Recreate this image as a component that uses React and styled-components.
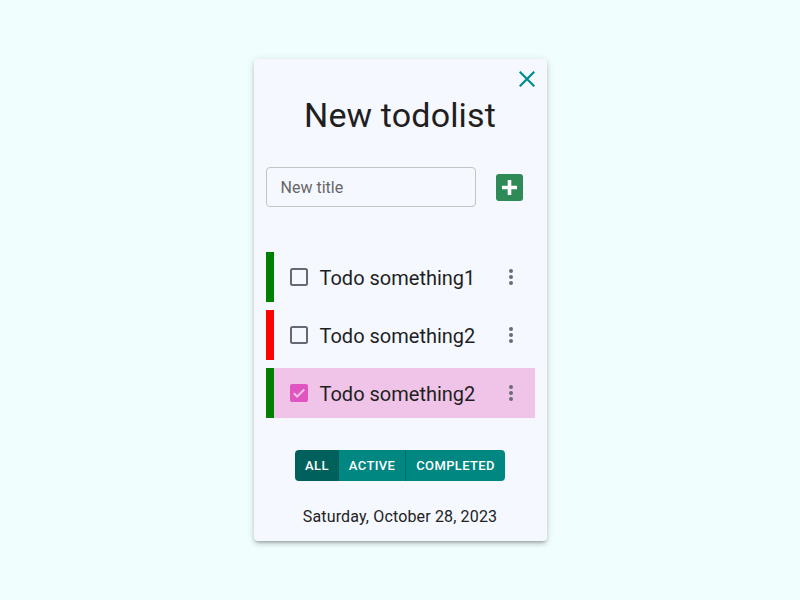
import React from "react";
import styled, { createGlobalStyle } from "styled-components";

const Global = createGlobalStyle`
  html, body { margin: 0; padding: 0; }
  body {
    background: #f0fffe;
    font-family: Roboto, "Liberation Sans", Arial, sans-serif;
  }
`;

const Page = styled.div`
  height: 100vh;
  display: flex;
  align-items: center;
  justify-content: center;
`;

const Card = styled.div`
  position: relative;
  width: 293px;
  box-sizing: border-box;
  padding: 35px 12px 12px;
  background: #f5f8ff;
  border-radius: 4px;
  box-shadow: 0px 3px 3px -2px rgba(0,0,0,0.2), 0px 3px 4px 0px rgba(0,0,0,0.14), 0px 1px 8px 0px rgba(0,0,0,0.12);
  display: flex;
  flex-direction: column;
`;

const CloseButton = styled.button`
  position: absolute;
  top: 9px;
  right: 9px;
  width: 22px;
  height: 22px;
  padding: 0;
  border: 0;
  background: transparent;
  display: flex;
  align-items: center;
  justify-content: center;
`;

const Title = styled.h1`
  margin: 0;
  font-size: 34px;
  line-height: 42px;
  font-weight: 400;
  color: #1f1f1f;
  text-align: center;
  letter-spacing: 0.15px;
`;

const InputRow = styled.div`
  margin-top: 31px;
  height: 40px;
  display: flex;
  align-items: center;
  justify-content: space-between;
`;

const TitleInput = styled.input`
  width: 210px;
  height: 40px;
  box-sizing: border-box;
  border: 1px solid #c4c4c4;
  border-radius: 4px;
  background: transparent;
  padding: 0 14px;
  font-family: inherit;
  font-size: 16px;
  color: #1f1f1f;
  outline: none;
  &::placeholder { color: #666; opacity: 1; }
`;

const AddButton = styled.button`
  width: 51px;
  height: 51px;
  padding: 0;
  border: 0;
  background: transparent;
  display: flex;
  align-items: center;
  justify-content: center;
  margin-right: -0.5px;
`;

const List = styled.ul`
  list-style: none;
  margin: 45px 0 0;
  padding: 0;
  display: flex;
  flex-direction: column;
  gap: 8px;
`;

const Item = styled.li`
  height: 50px;
  box-sizing: border-box;
  border-left: 8px solid ${(p) => p.$bar};
  background: ${(p) => (p.$done ? "#f0c4e8" : "transparent")};
  display: flex;
  align-items: center;
  padding: 0 22px 0 16px;
`;

const ItemText = styled.span`
  flex: 1;
  margin-left: 12px;
  padding-top: 2px;
  font-size: 20px;
  color: #1f1f1f;
  letter-spacing: 0px;
`;

const Filters = styled.div`
  margin: 32px auto 0;
  display: flex;
  border-radius: 4px;
  overflow: hidden;
`;

const FilterButton = styled.button`
  height: 31px;
  padding: 0 10px;
  border: 0;
  border-left: ${(p) => (p.$divider ? "1px solid #006764" : "0")};
  background: ${(p) => (p.$active ? "#00605c" : "#008782")};
  color: #fff;
  font-family: inherit;
  font-size: 13px;
  font-weight: 500;
  letter-spacing: 0.37px;
  text-transform: uppercase;
`;

const DateText = styled.div`
  margin-top: 24px;
  font-size: 16px;
  line-height: 24px;
  color: #222;
  text-align: center;
  letter-spacing: 0.15px;
`;

const CloseIcon = () => (
  <svg width="16" height="16" viewBox="0 0 16 16">
    <path d="M1.5 1.5 L14.5 14.5 M14.5 1.5 L1.5 14.5" stroke="#008b8b" strokeWidth="2.2" strokeLinecap="square" fill="none" />
  </svg>
);

const AddIcon = () => (
  <svg width="27" height="27" viewBox="0 0 27 27">
    <rect x="0" y="0" width="27" height="27" rx="3" fill="#2e8b57" />
    <path d="M13.5 6 V21 M6 13.5 H21" stroke="#fff" strokeWidth="3.6" fill="none" />
  </svg>
);

const CheckIcon = ({ checked }) =>
  checked ? (
    <svg width="18" height="18" viewBox="0 0 18 18">
      <rect x="0" y="0" width="18" height="18" rx="2" fill="#e055c0" />
      <path d="M3.8 9.2 L7.2 12.5 L14.2 5.5" stroke="#f0c4e8" strokeWidth="2" fill="none" />
    </svg>
  ) : (
    <svg width="18" height="18" viewBox="0 0 18 18">
      <rect x="1" y="1" width="16" height="16" rx="1.5" fill="none" stroke="#666a70" strokeWidth="2" />
    </svg>
  );

const DotsIcon = () => (
  <svg width="4" height="16" viewBox="0 0 4 16">
    <circle cx="2" cy="2" r="2" fill="#6b6b75" />
    <circle cx="2" cy="8" r="2" fill="#6b6b75" />
    <circle cx="2" cy="14" r="2" fill="#6b6b75" />
  </svg>
);

const todos = [
  { id: 1, title: "Todo something1", bar: "#008000", done: false },
  { id: 2, title: "Todo something2", bar: "#ff0000", done: false },
  { id: 3, title: "Todo something2", bar: "#008000", done: true },
];

export default function App() {
  return (
    <Page>
      <Global />
      <Card>
        <CloseButton aria-label="close"><CloseIcon /></CloseButton>
        <Title>New todolist</Title>
        <InputRow>
          <TitleInput placeholder="New title" />
          <AddButton aria-label="add"><AddIcon /></AddButton>
        </InputRow>
        <List>
          {todos.map((t) => (
            <Item key={t.id} $bar={t.bar} $done={t.done}>
              <CheckIcon checked={t.done} />
              <ItemText>{t.title}</ItemText>
              <DotsIcon />
            </Item>
          ))}
        </List>
        <Filters>
          <FilterButton $active>All</FilterButton>
          <FilterButton>Active</FilterButton>
          <FilterButton $divider>Completed</FilterButton>
        </Filters>
        <DateText>Saturday, October 28, 2023</DateText>
      </Card>
    </Page>
  );
}
